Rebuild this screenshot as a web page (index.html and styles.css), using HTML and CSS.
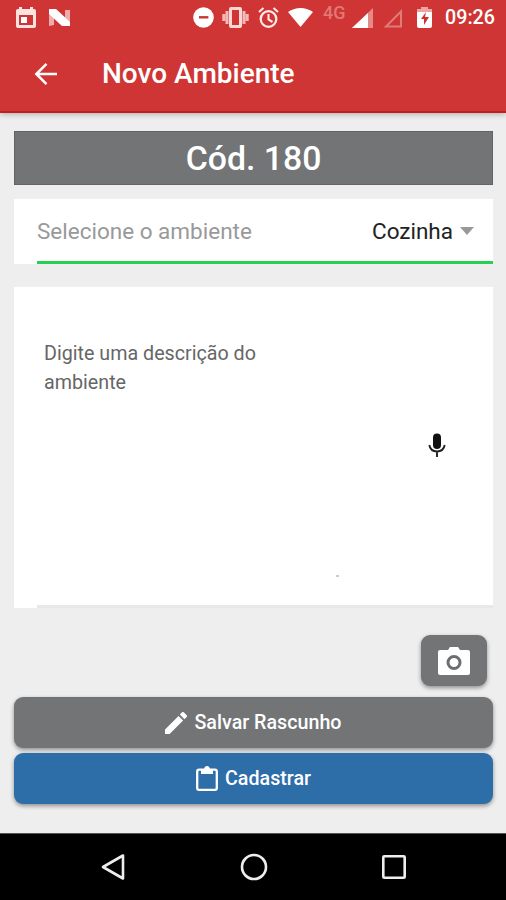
FILE: index.html
```html
<!DOCTYPE html>
<html lang="pt-BR">
<head>
    <meta charset="UTF-8">
    <meta name="viewport" content="width=device-width, initial-scale=1.0">
    <title>Novo Ambiente</title>
    <link rel="stylesheet" href="styles.css">
</head>
<body>

    <header>
        <div class="status-bar">
            <div class="status-left">
                <svg width="20" height="22" viewBox="0 0 20 22"><path fill="#fde3e0" fill-rule="evenodd" d="M3 0h3v2h8V0h3v2h1q2 0 2 2v15q0 2-2 2H2q-2 0-2-2V4q0-2 2-2h1zM3 8v10h14V8z"/><path fill="#fff" d="M5 10h6v6H5z"/></svg>
                <svg width="21" height="18" viewBox="0 0 21 18"><path fill="#efabab" d="M0 1l5-1v16l-5 1zM16 1h5v15h-5z"/><path fill="#fff" d="M0 0h7l14 13v4h-8L0 5z"/></svg>
            </div>
            <div class="status-right">
                <svg width="21" height="21" viewBox="0 0 21 21"><circle cx="10.5" cy="10.5" r="10.3" fill="#fff"/><path stroke="#c93332" stroke-width="2.4" d="M6 10.3h9.4"/></svg>
                <svg class="vibrate" width="27" height="21" viewBox="0 0 27 21"><path fill="#fbd8d6" fill-rule="evenodd" d="M9 0h9q2 0 2 2v17q0 2-2 2H9q-2 0-2-2V2q0-2 2-2zm1 3v15h7V3z"/><path stroke="#f5bab8" stroke-width="3" d="M5 4v13M1.800 7v7M22 4v13M25.200 7v7"/></svg>
                <svg class="alarm" width="21" height="21" viewBox="0 0 21 21" fill="none" stroke="#ffe9e7"><circle cx="10.5" cy="12" r="7.8" stroke-width="2.3"/><path stroke-width="2.1" d="M1 5l4.5-4M20 5l-4.500-4M10.500 7v5.500l4 2.500"/></svg>
                <svg class="wifi" width="25" height="19" viewBox="0 0 25 19"><path fill="#fff" d="M0 4Q12.500-4 25 4L12.500 19z"/></svg>
                <span class="network">4G</span>
                <svg class="signal" width="21" height="20" viewBox="0 0 21 20"><path fill="#e58a89" d="M0 20L21 0v20z"/><path fill="#fff" d="M0 20L16 5v15z"/></svg>
                <svg class="signal-off" width="20" height="20" viewBox="0 0 20 20"><path fill="none" stroke="#e07b79" stroke-width="2" d="M3 18.500L18 3.500v15z"/></svg>
                <svg class="battery" width="15" height="21" viewBox="0 0 15 21"><path fill="#eda5a2" d="M4 0h7v2h4v4H0V2h4z"/><path fill="#fff" d="M0 5h15v14q0 2-2 2H2q-2 0-2-2z"/><path fill="#c93332" d="M9 5l-5 7h3v6l5-8H8z"/></svg>
                <span class="time">09:26</span>
            </div>
        </div>
        <div class="toolbar">
            <svg width="24" height="24" viewBox="0 0 24 24"><path fill="none" stroke="#fff" stroke-width="2.500" d="M23 12H3M12.500 1.800L2.300 12l10.200 10.200"/></svg>
            <h1>Novo Ambiente</h1>
        </div>
    </header>

    <main>
        <div class="code">Cód. 180</div>

        <div class="select-item">
            <div class="select-inner">
                <span class="label">Selecione o ambiente</span>
                <span class="value">Cozinha</span>
                <span class="arrow"></span>
            </div>
        </div>

        <div class="description">
            <div class="description-inner">
                <p>Digite uma descrição do ambiente</p>
                <svg class="mic" width="18" height="25" viewBox="0 0 18 25"><rect x="5" y="0.500" width="8" height="15.500" rx="4" fill="#111"/><path fill="none" stroke="#222" stroke-width="1.900" d="M1.300 12Q2.500 18.500 9 18.500T16.700 12M9 18.500V24"/></svg>
                <span class="dot"></span>
            </div>
        </div>

        <button class="btn camera" aria-label="Foto">
            <svg width="32" height="28" viewBox="0 0 32 28"><path fill="#fff" d="M2 3h8l2-3h8l2 3h8q2 0 2 2v21q0 2-2 2H2q-2 0-2-2V5q0-2 2-2z"/><circle cx="16" cy="15.500" r="6" fill="#fff" stroke="#6b6d6f" stroke-width="3"/></svg>
        </button>
        <button class="btn draft">
            <svg width="22" height="22" viewBox="3 3 18 18"><path fill="#fff" d="M3 17.250V21h3.750L17.810 9.940l-3.750-3.750zM20.710 7.040a1 1 0 0 0 0-1.410l-2.340-2.340a1 1 0 0 0-1.410 0l-1.830 1.830 3.750 3.750z"/></svg>
            Salvar Rascunho
        </button>
        <button class="btn submit">
            <svg width="22" height="25" viewBox="0 0 22 25"><path fill="none" stroke="#fff" stroke-width="2.300" d="M3 3.700h16q1.800 0 1.800 1.800v16.500q0 1.800-1.800 1.800H3q-1.800 0-1.800-1.800V5.500q0-1.800 1.800-1.800z"/><path fill="#fff" d="M5 3h3q.6-3 3-3t3 3h3v5H5z"/></svg>
            Cadastrar
        </button>
    </main>

    <nav class="android-nav">
        <svg width="26" height="28" viewBox="0 0 26 28"><path d="M3 14L23 2.500v23z"/></svg>
        <svg width="28" height="28" viewBox="0 0 28 28"><circle cx="14" cy="14" r="12"/></svg>
        <svg width="26" height="26" viewBox="0 0 26 26"><rect x="2.300" y="2.300" width="21.400" height="21.400" rx="1"/></svg>
    </nav>

</body>
</html>
```
FILE: styles.css
```css
* {
    box-sizing: border-box;
}
body {
    font-family: Roboto, sans-serif;
    margin: 0;
    height: 900px;
    display: flex;
    flex-direction: column;
    background-color: #eeeeee;
    overflow: hidden;
}
svg {
    display: block;
    flex: none;
}
header {
    height: 113px;
    flex: none;
    background-color: #cf3534;
    border-bottom: 2px solid #c01f1e;
    box-shadow: 0 1px 6px rgba(0, 0, 0, 0.3);
    color: #fff;
}
.status-bar {
    height: 35px;
    padding: 0 10px 0 16px;
    display: flex;
    justify-content: space-between;
    align-items: center;
}
.status-left, .status-right {
    display: flex;
    align-items: center;
}
.status-left {
    gap: 13px;
}
.vibrate {
    margin-left: 8px;
}
.alarm {
    margin-left: 9px;
}
.wifi {
    margin-left: 9px;
}
.network {
    width: 25px;
    margin: 0 4px 9px 10px;
    font-size: 18px;
    font-weight: 500;
    line-height: 18px;
    color: #e17876;
}
.signal-off {
    margin-left: 10px;
}
.battery {
    margin-left: 14px;
}
.time {
    width: 51px;
    margin-left: 13px;
    font-size: 19.7px;
    font-weight: 500;
}
.toolbar {
    height: 77px;
    padding-left: 34px;
    display: flex;
    align-items: center;
    gap: 44px;
}
.toolbar h1 {
    margin: 0;
    font-size: 28px;
    font-weight: 500;
}
main {
    flex: 1;
    padding: 18px 13px 0 14px;
    display: flex;
    flex-direction: column;
}
.code {
    height: 54px;
    line-height: 53px;
    background-color: #727476;
    border: 1px solid #626467;
    color: #fff;
    font-size: 33.8px;
    font-weight: 500;
    text-align: center;
}
.select-item {
    height: 65px;
    margin-top: 14px;
    padding-left: 23px;
    background-color: #fff;
}
.select-inner {
    height: 65px;
    padding: 1px 19px 0 0;
    display: flex;
    align-items: center;
    border-bottom: 3px solid #27d054;
    font-size: 22.5px;
}
.label {
    color: #999;
}
.value {
    margin-left: auto;
    color: #222;
}
.arrow {
    margin-left: 7px;
    border: 7px solid transparent;
    border-top: 8px solid #999;
    border-bottom: 0;
}
.description {
    height: 321px;
    margin-top: 23px;
    padding-left: 23px;
    background-color: #fff;
}
.description-inner {
    position: relative;
    height: 321px;
    padding: 52px 47px 0 7px;
    display: flex;
    justify-content: space-between;
    align-items: flex-start;
    border-bottom: 3px solid #e8e8e8;
}
.description p {
    width: 230px;
    margin: 0;
    color: #666;
    font-size: 19.7px;
    line-height: 29px;
}
.mic {
    margin-top: 94px;
}
.dot {
    position: absolute;
    left: 299px;
    top: 288px;
    width: 3px;
    height: 2px;
    background-color: #ccc;
}
.btn {
    height: 51px;
    padding: 0;
    border: none;
    border-radius: 9px;
    display: flex;
    justify-content: center;
    align-items: center;
    gap: 7px;
    box-shadow: 0 2px 4px rgba(0, 0, 0, 0.4);
    background-color: #727476;
    color: #fff;
    font-family: inherit;
    font-size: 19.7px;
    font-weight: 500;
}
.camera {
    width: 66px;
    margin: 27px 6px 11px auto;
}
.submit {
    margin-top: 5px;
    background-color: #2d6da8;
}
.android-nav {
    height: 67px;
    padding: 0 99px 0 100px;
    display: flex;
    justify-content: space-between;
    align-items: center;
    background-color: #000;
    border-top: 1px solid #555;
}
.android-nav svg {
    fill: none;
    stroke: #eee;
    stroke-width: 2.6;
    stroke-linejoin: round;
}
```
